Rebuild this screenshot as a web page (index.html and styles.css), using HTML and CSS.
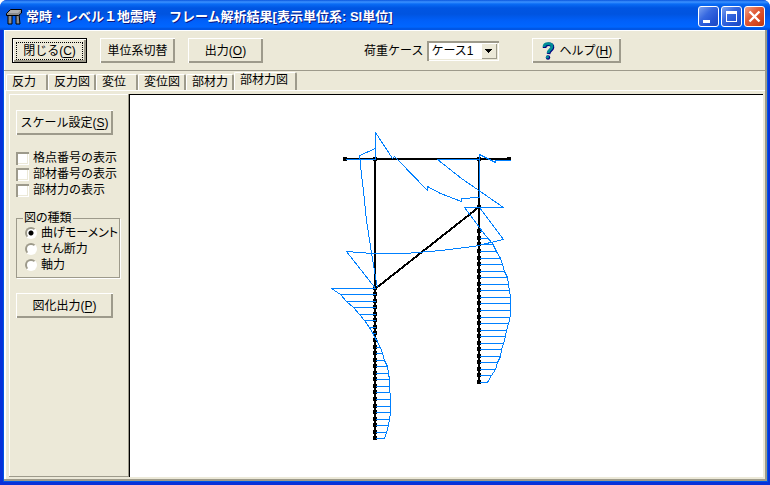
FILE: index.html
```html
<!DOCTYPE html>
<html lang="ja">
<head>
<meta charset="utf-8">
<title>フレーム解析結果</title>
<link rel="stylesheet" href="styles.css">
</head>
<body>
<div class="window">
  <header class="titlebar">
    <svg class="app-icon" width="16" height="16" viewBox="0 0 16 16" aria-hidden="true">
      <path d="M3 5H6V15H2V7ZM10 5H13L14 15H10Z" fill="#8c8c8c" stroke="#000"/>
      <path d="M.500 4.500L4.500 .500H15.500V4L12.500 6.500H.500Z" fill="#8c8c8c" stroke="#000"/>
      <path d="M2 4L5 1H15L12 4Z" fill="#b0b0b0"/>
    </svg>
    <h1 class="title">常時・レベル１地震時　フレーム解析結果[表示単位系: SI単位]</h1>
    <div class="window-buttons">
      <button class="window-button" aria-label="最小化"><svg width="19" height="19" viewBox="0 0 19 19"><path d="M4 13H11V16H4Z" fill="#fff"/></svg></button>
      <button class="window-button" aria-label="最大化"><svg width="19" height="19" viewBox="0 0 19 19"><path d="M4 4H15V15H4ZM5 7V14H14V7Z" fill="#fff" fill-rule="evenodd"/></svg></button>
      <button class="window-button window-button-close" aria-label="閉じる"><svg width="19" height="19" viewBox="0 0 19 19"><path d="M4.500 4.500L14.500 14.500M14.500 4.500L4.500 14.500" stroke="#fff" stroke-width="2.400"/></svg></button>
    </div>
  </header>
  <main class="client">
    <div class="toolbar">
      <button class="button button-default"><span class="focus">閉じる(<u>C</u>)</span></button>
      <button class="button">単位系切替</button>
      <button class="button">出力(<u>O</u>)</button>
      <div class="case">
        <label for="case">荷重ケース</label>
        <span class="combo">
          <select id="case"><option>ケース1</option></select>
          <svg class="combo-arrow" width="16" height="16" viewBox="0 0 16 16" shape-rendering="crispEdges" aria-hidden="true"><path d="M4 6H11V7H10V8H9V9H8V10H7V9H6V8H5V7H4Z"/></svg>
        </span>
      </div>
      <button class="button button-help">
        <svg width="13" height="18" viewBox="0 0 13 18" aria-hidden="true">
          <path d="M2.500 6C2.500 1 11 1 10.500 5.500C10 8.500 7 8 6.500 12" fill="none" stroke="#000080" stroke-width="3.600"/>
          <path d="M2 5C2 .5 10.500 .5 10 4.500C9.500 8 6.500 7.500 6 11" fill="none" stroke="#008c96" stroke-width="2.800"/>
          <circle cx="6" cy="15.500" r="2.200" fill="#000080"/><circle cx="5.500" cy="15" r="1.600" fill="#008c96"/>
        </svg>
        <span>ヘルプ(<u>H</u>)</span>
      </button>
    </div>
    <div class="tabs" role="tablist">
      <button class="tab" role="tab">反力</button>
      <button class="tab" role="tab">反力図</button>
      <button class="tab" role="tab">変位</button>
      <button class="tab" role="tab">変位図</button>
      <button class="tab" role="tab">部材力</button>
      <button class="tab tab-active" role="tab" aria-selected="true">部材力図</button>
    </div>
    <div class="page">
      <aside class="panel">
        <button class="button">スケール設定(<u>S</u>)</button>
        <div class="checks">
          <label class="choice"><input type="checkbox" class="check">格点番号の表示</label>
          <label class="choice"><input type="checkbox" class="check">部材番号の表示</label>
          <label class="choice"><input type="checkbox" class="check">部材力の表示</label>
        </div>
        <fieldset class="group">
          <legend>図の種類</legend>
          <label class="choice"><input type="radio" name="kind" class="radio" checked>曲げモーメント</label>
          <label class="choice"><input type="radio" name="kind" class="radio">せん断力</label>
          <label class="choice"><input type="radio" name="kind" class="radio">軸力</label>
        </fieldset>
        <button class="button">図化出力(<u>P</u>)</button>
      </aside>
      <div class="canvas">
        <svg class="diagram" role="img" aria-label="曲げモーメント図" shape-rendering="crispEdges">
          <defs>
            <marker id="node" markerUnits="userSpaceOnUse" markerWidth="4" markerHeight="4" refX="2" refY="2"><path d="M0 0H4V4H0Z"/></marker>
          </defs>
          <g transform="translate(-130 -95)">
            <!-- members -->
            <g fill="none" stroke="#000" stroke-width="2">
              <path d="M345 159H375H479H509" marker-start="url(#node)" marker-mid="url(#node)" marker-end="url(#node)"/>
              <path d="M375 159V288M479 159V231"/>
              <path d="M375 289L479 207" marker-end="url(#node)"/>
              <path d="M375 288V294V301V307V314V320V327V333V340V347V353V360V366V373V379V386V392V399V406V412V419V425V432V438" marker-start="url(#node)" marker-mid="url(#node)" marker-end="url(#node)"/>
              <path d="M479 231V238V244V251V258V264V271V277V284V290V297V303V310V317V323V330V336V343V349V356V362V369V375V382" marker-start="url(#node)" marker-mid="url(#node)" marker-end="url(#node)"/>
            </g>
            <!-- moment curves -->
            <g transform="translate(.5 .5)" fill="none" stroke="#0080ff">
              <path d="M345 159H375V132L392 158L394 156L397 159L427 190V186L440 193L461 201V198L479 197V154L495 162V160H510"/>
              <path d="M375 148L359 155L361 174L363 191L366 220L370 246L375 277L377 287"/>
              <path d="M479 159H437L461 178L503 207H464L479 227"/>
              <path d="M375 288L346 251L372 253H405L440 250L473 246L503 239L479 207"/>
              <path d="M375 288H331L340 294L346 301L353 307L359 314L364 320L369 327L375 338L380 347L382 353L384 360L387 366L388 373L389 379L389 386L390 399V412L389 419L388 425L386 432L384 438H375"/>
              <path d="M479 227L485 235L492 243L496 251L500 258L502 264L504 271L507 277L508 284L509 290L510 297V313L509 320L508 323L506 330L505 336L503 343L501 349L500 356L497 362L495 369L491 375L487 382H479"/>
              <path d="M340 294H375M346 301H375M353 307H375M359 314H375M364 320H375M369 327H375M372 333H375M377 340H375M380 347H375M382 353H375M384 360H375M387 366H375M388 373H375M389 379H375M389 386H375M389 392H375M390 399H375M390 406H375M390 412H375M389 419H375M388 425H375M386 432H375"/>
              <path d="M479 231H482M479 238H487M479 244H492M479 251H496M479 258H500M479 264H502M479 271H504M479 277H507M479 284H508M479 290H509M479 297H510M479 303H510M479 310H510M479 317H509M479 323H508M479 330H506M479 336H505M479 343H503M479 349H501M479 356H500M479 362H497M479 369H495M479 375H491"/>
            </g>
          </g>
        </svg>
      </div>
    </div>
  </main>
</div>
</body>
</html>
```
FILE: styles.css
```css
* { box-sizing: border-box; }
body {
  margin: 0;
  background: #fff;
  color: #000;
  font: 12px/16px "Liberation Sans", "Noto Sans CJK JP", sans-serif;
}
button, select { font: inherit; color: inherit; }
u { text-underline-offset: 2px; }

.window {
  display: flex;
  flex-direction: column;
  min-height: 100vh;
  border-radius: 7px 7px 0 0;
  background: #0831d9;
  overflow: hidden;
}
.titlebar {
  display: flex;
  align-items: center;
  gap: 4px;
  height: 30px;
  padding: 3px 5px 0 6px;
  background: linear-gradient(#0a55dd 0, #3c92ff 2px, #0a6cf5 4px, #0055e2 8px, #0054e0 14px, #0060fa 21px, #0066ff 27px, #0048cc 30px);
}
.title {
  flex: 1;
  margin: 0;
  color: #fff;
  font-size: 13px;
  line-height: 20px;
  font-weight: bold;
  white-space: nowrap;
  text-shadow: 1px 1px #0a1883;
}
.window-buttons { display: flex; gap: 2px; }
.window-button {
  width: 21px;
  height: 21px;
  padding: 0;
  border: 1px solid #fff;
  border-radius: 3px;
  background: linear-gradient(135deg, #7ba2f0, #3668e0 40%, #2454d4 70%, #1c48c0);
}
.window-button svg { display: block; }
.window-button-close { background: linear-gradient(135deg, #f0a088, #e05c38 40%, #d84820 70%, #b83810); }

.client {
  flex: 1;
  display: flex;
  flex-direction: column;
  margin: 0 3px 4px 4px;
  border: solid #9d9a8b;
  border-width: 0 2px 2px 0;
  background: #ece9d8;
  box-shadow: 0 0 0 1px #0055e5, inset 1px 1px #fff;
}
.toolbar {
  display: flex;
  align-items: flex-start;
  gap: 13px;
  height: 41px;
  padding: 8px;
  border-bottom: 1px solid #9d9a8b;
}
.button {
  display: flex;
  align-items: center;
  justify-content: center;
  min-width: 75px;
  height: 25px;
  padding: 0;
  border: 0;
  background: #ece9d8;
  box-shadow: inset 1px 1px #fff, inset -2px -2px #9d9a8b;
  white-space: nowrap;
}
.button-default {
  padding: 3px;
  border: 1px solid #000;
}
.focus {
  flex: 1;
  border: 1px dotted #000;
}
.button-help { min-width: 89px; gap: 5px; }
.case {
  display: flex;
  align-items: center;
  gap: 4px;
  height: 25px;
  margin: 0 20px 0 88px;
}
.combo {
  display: flex;
  align-items: center;
  width: 72px;
  height: 20px;
  padding: 2px;
  background: #fff;
  box-shadow: inset 2px 2px #9d9a8b, inset -1px -1px #fff, inset -2px -2px #ece9d8;
  position: relative;
}
.combo select {
  appearance: none;
  width: 100%;
  height: 16px;
  padding: 0 16px 0 2px;
  border: 0;
  background: transparent;
  line-height: 16px;
}
.combo-arrow {
  position: absolute;
  right: 2px;
  top: 2px;
  pointer-events: none;
  background: #ece9d8;
  box-shadow: inset 1px 1px #fff, inset -1px -1px #9d9a8b;
}

.tabs {
  display: flex;
  align-items: flex-end;
  height: 19px;
  padding-left: 2px;
}
.tab {
  height: 16px;
  min-width: 42px;
  padding: 0 4px 0 5px;
  border: solid #fff;
  border-width: 1px 2px 0 1px;
  border-right-color: #9d9a8b;
  border-radius: 2px 2px 0 0;
  background: #ece9d8;
  line-height: 15px;
  text-align: left;
  white-space: nowrap;
}
.tab-active {
  height: 19px;
  min-width: 63px;
  margin-bottom: -1px;
  padding-bottom: 3px;
}
.page {
  flex: 1;
  display: flex;
  margin-left: 1px;
  padding: 3px 2px 2px 3px;
  border: solid #fff;
  border-width: 1px 0 0 1px;
}
.panel {
  flex: 0 0 120px;
  display: flex;
  flex-direction: column;
  align-items: stretch;
  padding: 16px 8px 16px 7px;
  border: solid #9d9a8b;
  border-width: 0 1px 1px 0;
  box-shadow: inset 1px 1px #fff;
}
.panel > .button { width: 97px; flex: none; }
.checks { margin: 15px 0 13px; }
.choice {
  display: flex;
  align-items: center;
  gap: 4px;
  height: 16px;
  white-space: nowrap;
}
.check, .radio {
  appearance: none;
  flex: none;
  width: 13px;
  height: 13px;
  margin: 0;
  background: #fff;
}
.check { box-shadow: inset 2px 2px #9d9a8b, inset -1px -1px #fff, inset -2px -2px #ece9d8; }
.radio {
  width: 12px;
  height: 12px;
  border: 2px solid;
  border-color: #9d9a8b #fff #fff #9d9a8b;
  border-radius: 50%;
}
.radio:checked { background: radial-gradient(circle, #000 2px, #fff 3px); }
.group {
  margin: 0 0 15px;
  padding: 0 0 4px 8px;
  border: 1px solid #9d9a8b;
  box-shadow: 1px 1px #fff;
  font-feature-settings: "palt";
}
.group legend {
  height: 14px;
  margin-left: -2px;
  padding: 0 1px;
  line-height: 14px;
}
.canvas {
  flex: 1;
  display: flex;
  border: solid #000;
  border-width: 1px 0 0 1px;
  background: #fff;
}
.diagram { flex: 1; width: 100%; height: auto; min-height: 350px; }
```
